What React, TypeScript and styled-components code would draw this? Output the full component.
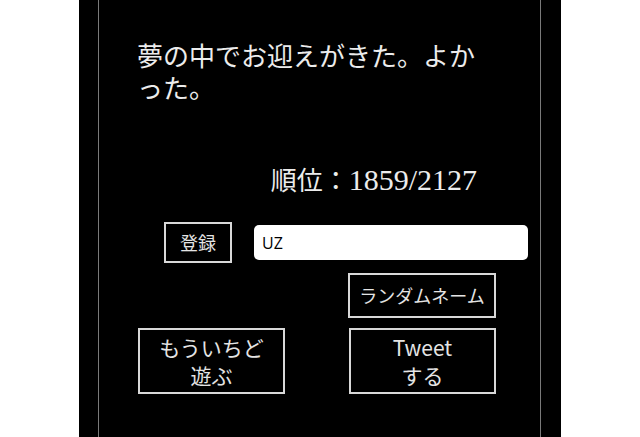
import React, { useState } from 'react';
import styled, { createGlobalStyle } from 'styled-components';

const GlobalStyle = createGlobalStyle`
  html, body {
    margin: 0;
    padding: 0;
    background: #fff;
  }
`;

const Stage = styled.div`
  width: 482px;
  min-height: 100vh;
  margin: 0 auto;
  padding: 0 20px 0 19px;
  box-sizing: border-box;
  background: #000;
`;

const Frame = styled.div`
  min-height: 100vh;
  border-left: 1px solid #7a7a7a;
  border-right: 1px solid #7a7a7a;
  box-sizing: border-box;
  padding-top: 42px;
  color: #ececec;
`;

const Message = styled.p`
  margin: 0 0 0 38px;
  width: 350px;
  font-family: "Liberation Serif", "Noto Sans CJK JP", serif;
  font-size: 26px;
  line-height: 32px;
`;

const Rank = styled.div`
  margin-top: 58px;
  padding-right: 63px;
  text-align: right;
  font-family: "Liberation Serif", "Noto Sans CJK JP", serif;
  font-size: 26px;
  line-height: 32px;

  span {
    font-size: 30px;
  }
`;

const EntryRow = styled.div`
  display: flex;
  align-items: center;
  gap: 22px;
  margin-top: 24px;
  padding: 0 12px 0 65px;
`;

const OutlineButton = styled.button<{ $w: number; $h: number; $size?: number }>`
  width: ${p => p.$w}px;
  height: ${p => p.$h}px;
  flex: none;
  box-sizing: border-box;
  padding: 0;
  background: #000;
  border: 2px solid #d8d8d8;
  color: #e4e4e4;
  font-family: "Noto Sans CJK JP", sans-serif;
  font-size: ${p => p.$size ?? 18}px;
  line-height: 1.35;
  cursor: pointer;
`;

const NameInput = styled.input`
  flex: 1;
  height: 35px;
  box-sizing: border-box;
  border: none;
  border-radius: 5px;
  background: #fff;
  padding: 0 8px;
  font-family: "Open Sans", "Noto Sans CJK JP", sans-serif;
  font-size: 16px;
  font-weight: 500;
  color: #000;
  outline: none;
`;

const ButtonGrid = styled.div`
  display: grid;
  grid-template-columns: 147px 147px;
  justify-content: space-between;
  row-gap: 10px;
  width: 358px;
  margin: 10px 0 0 39px;
`;

const RightCell = styled.div`
  grid-column: 2;
  display: flex;
  justify-content: flex-end;
`;

const App: React.FC = () => {
  const [name, setName] = useState('UZ');

  return (
    <>
      <GlobalStyle />
      <Stage>
        <Frame>
          <Message>夢の中でお迎えがきた。よかった。</Message>
          <Rank>
            順位：<span>1859/2127</span>
          </Rank>
          <EntryRow>
            <OutlineButton $w={68} $h={41}>登録</OutlineButton>
            <NameInput value={name} onChange={e => setName(e.target.value)} />
          </EntryRow>
          <ButtonGrid>
            <RightCell>
              <OutlineButton $w={148} $h={45}>ランダムネーム</OutlineButton>
            </RightCell>
            <OutlineButton $w={147} $h={66} $size={21}>
              もういちど<br />遊ぶ
            </OutlineButton>
            <OutlineButton $w={147} $h={66} $size={21}>
              Tweet<br />する
            </OutlineButton>
          </ButtonGrid>
        </Frame>
      </Stage>
    </>
  );
};

export default App;
